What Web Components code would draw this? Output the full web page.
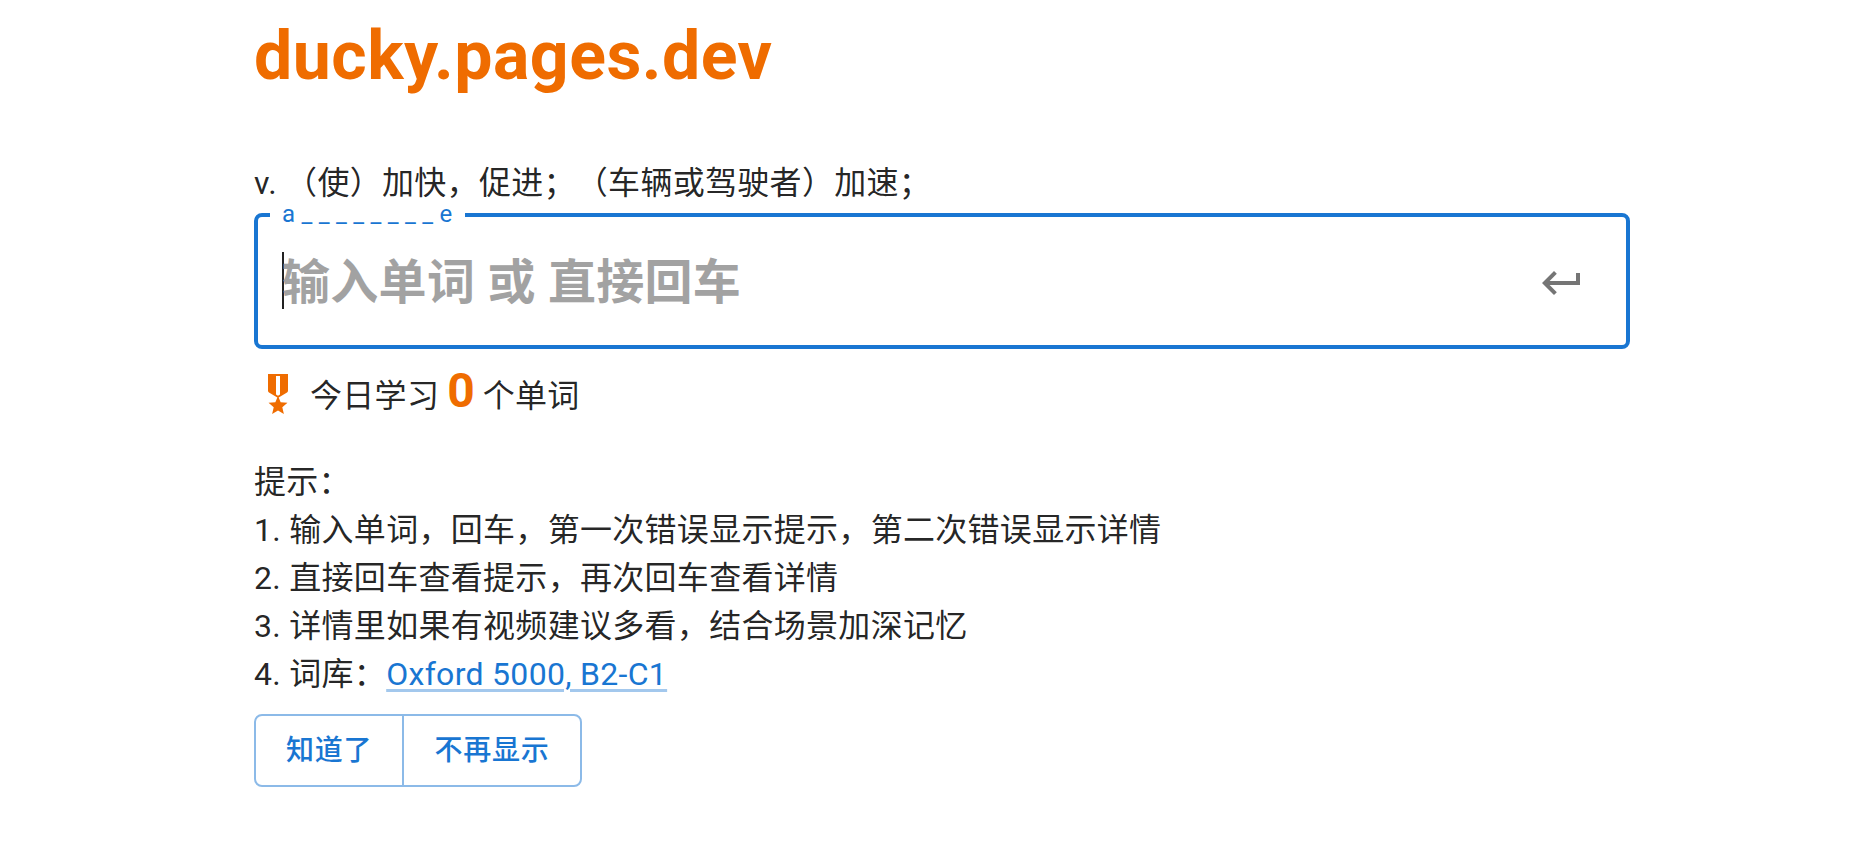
<!DOCTYPE html>
<html lang="zh"><head><meta charset="utf-8"><title>ducky.pages.dev</title>
<style>
html,body{margin:0;padding:0;background:#fff;}
body{font-family:Roboto,"Noto Sans CJK SC",sans-serif;color:rgba(0,0,0,.87);text-spacing-trim:space-all;}
</style></head><body>
<ducky-app>
  <ducky-title>ducky.pages.dev</ducky-title>
  <ducky-definition>v. （使）加快，促进；（车辆或驾驶者）加速；</ducky-definition>
  <ducky-input legend="a _ _ _ _ _ _ _ _ e" placeholder="输入单词 或 直接回车"></ducky-input>
  <ducky-count count="0"></ducky-count>
  <ducky-tips>
    <div>提示：</div>
    <div>1. 输入单词，回车，第一次错误显示提示，第二次错误显示详情</div>
    <div>2. 直接回车查看提示，再次回车查看详情</div>
    <div>3. 详情里如果有视频建议多看，结合场景加深记忆</div>
    <div>4. 词库：<ducky-link>Oxford 5000, B2-C1</ducky-link></div>
  </ducky-tips>
  <ducky-buttons><ducky-button>知道了</ducky-button><ducky-button>不再显示</ducky-button></ducky-buttons>
</ducky-app>
<script>
const FONT='Roboto,"Noto Sans CJK SC",sans-serif';
const LS='letter-spacing:.3px;text-spacing-trim:space-all;';
function def(name,html){
  customElements.define(name,class extends HTMLElement{
    connectedCallback(){
      if(this.shadowRoot)return;
      const r=this.attachShadow({mode:'open'});
      r.innerHTML=typeof html==='function'?html(this):html;
    }
  });
}
def('ducky-app',`<style>:host{display:flex;flex-direction:column;width:1376px;margin-left:254px;}</style><slot></slot>`);
def('ducky-title',`<style>:host{display:block;font:700 68px/84px ${FONT};letter-spacing:.5px;color:#ef6c00;margin-top:14px;}</style><slot></slot>`);
def('ducky-definition',`<style>:host{display:block;font:400 32px/48px ${FONT};${LS}color:rgba(0,0,0,.87);margin-top:61px;}</style><slot></slot>`);
def('ducky-input',h=>`<style>
:host{display:block;margin-top:-4px;}
fieldset{margin:0;padding:0;border:4px solid #1976d2;border-radius:8px;height:146px;box-sizing:border-box;display:flex;min-width:0;}
legend{padding:0 12px 2px;margin-left:12px;font:400 24px/22px ${FONT};letter-spacing:.24px;color:#1976d2;white-space:pre;min-width:168px;}
.row{display:flex;align-items:center;width:100%;height:112px;padding:0 40px 0 24px;box-sizing:border-box;}
.ph{flex:1;display:flex;align-items:center;font:700 48px/60px ${FONT};${LS}color:#a2a2a2;}
.caret{width:2px;height:57px;background:#222;margin:0 -2px 5px 0;}
svg{width:48px;height:48px;display:block;}
</style>
<fieldset><legend>${h.getAttribute('legend')}</legend>
<div class="row"><div class="ph"><span class="caret"></span><span>${h.getAttribute('placeholder')}</span></div>
<svg viewBox="0 0 24 24"><path fill="#757575" d="M19 7v4H5.83l3.58-3.59L8 6l-6 6 6 6 1.41-1.41L5.83 13H21V7z"/></svg></div></fieldset>`);
def('ducky-count',h=>`<style>
:host{display:flex;align-items:center;margin-top:18px;font:400 32px/48px ${FONT};${LS}color:rgba(0,0,0,.87);}
svg{width:48px;height:48px;margin-right:8px;display:block;flex:none;}
b{font:700 48px/48px ${FONT};letter-spacing:0;color:#ef6c00;margin:0 8px;}
</style>
<svg viewBox="0 0 24 24"><path fill="#ef6c00" d="M17 10.43V2H7v8.43c0 .35.18.68.49.86l4.18 2.51-.99 2.34-3.41.29 2.59 2.24L9.07 22 12 20.23 14.93 22l-.78-3.33 2.59-2.24-3.41-.29-.99-2.34 4.18-2.51c.3-.18.48-.5.48-.86zm-4 1.800l-1 .6-1-.6V3h2v9.230z"/></svg>
<div><span>今日学习</span><b>${h.getAttribute('count')}</b><span>个单词</span></div>`);
def('ducky-tips',`<style>:host{display:block;margin-top:38px;font:400 32px/48px ${FONT};${LS}color:rgba(0,0,0,.87);}</style><slot></slot>`);
def('ducky-link',`<style>:host{display:inline;color:#1976d2;text-decoration:underline;text-decoration-color:rgba(25,118,210,.4);text-decoration-thickness:3px;text-underline-offset:4px;}</style><slot></slot>`);
def('ducky-buttons',`<style>:host{display:inline-flex;align-self:flex-start;margin-top:16px;border:2px solid #8cbae8;border-radius:8px;}</style><slot></slot>`);
def('ducky-button',`<style>:host{display:block;padding:10px 30px;font:500 28px/49px ${FONT};letter-spacing:.8px;color:#1976d2;}:host(:not(:last-child)){border-right:2px solid #8cbae8;}</style><slot></slot>`);
</script>
</body></html>
